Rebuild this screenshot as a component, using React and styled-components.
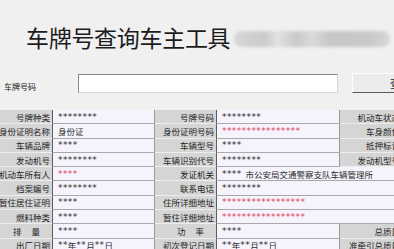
import React from "react";
import styled, { createGlobalStyle } from "styled-components";

const Global = createGlobalStyle`
  html, body { margin: 0; padding: 0; background: #f0f0f0; overflow: hidden; }
  body { font-family: "Noto Sans CJK SC", "DejaVu Sans", sans-serif; color: #1e1e1e; }
`;

const Page = styled.div`
  width: 394px;
  height: 249px;
  overflow: hidden;
  display: flex;
  flex-direction: column;
`;

const TitleBar = styled.div`
  display: flex;
  align-items: center;
  padding: 26px 0 0 26px;
  height: 23px;
  gap: 4px;
`;

const Title = styled.h1`
  margin: 0;
  font-size: 23px;
  line-height: 23px;
  font-weight: 400;
  letter-spacing: -0.3px;
  color: #1c1c1c;
  white-space: nowrap;
  flex-shrink: 0;
`;

const Blur = styled.div`
  width: 156px;
  height: 16px;
  flex-shrink: 0;
  border-radius: 8px;
  background: linear-gradient(90deg, #d6d6d6 0%, #cbcbcb 20%, #e2e2e2 28%, #c9c9c9 40%, #dadada 50%, #c6c6c6 62%, #c9c9c9 88%, #d8d8d8 100%);
  filter: blur(1.5px);
  margin-top: 2px;
`;

const SearchRow = styled.div`
  display: flex;
  align-items: center;
  margin-top: 24px;
  height: 20px;
  padding-left: 4px;
  width: 500px;
`;

const SearchLabel = styled.span`
  font-size: 8px;
  width: 74px;
  flex-shrink: 0;
  margin-top: 6px;
  color: #222;
  white-space: nowrap;
`;

const Input = styled.div`
  width: 260px;
  height: 19px;
  flex-shrink: 0;
  box-sizing: border-box;
  background: #fff;
  border-top: 1px solid #8a8a8a;
  border-left: 1px solid #8a8a8a;
  border-right: 1px solid #d8d8d8;
  border-bottom: 1px solid #d8d8d8;
`;

const Button = styled.div`
  margin-left: 14px;
  width: 100px;
  height: 20px;
  flex-shrink: 0;
  background: #ececec;
  border-top: 1px solid #fff;
  border-left: 1px solid #fff;
  border-bottom: 1px solid #5a5a5a;
  box-sizing: border-box;
  display: flex;
  align-items: center;
  padding-left: 37px;
  font-size: 11px;
  color: #222;
  white-space: nowrap;
`;

const Grid = styled.div`
  margin-top: 17px;
  display: grid;
  grid-template-columns: 52px 103px 61px 124px 62px;
  grid-auto-rows: 14.3px;
  width: 402px;
`;

const Label = styled.div`
  background: #d5d5d5;
  border-bottom: 1px solid #ededed;
  box-sizing: border-box;
  display: flex;
  align-items: center;
  justify-content: flex-end;
  padding-right: 2px;
  font-size: 8.5px;
  white-space: nowrap;
  overflow: hidden;
  color: #1e1e1e;
  letter-spacing: ${(p) => (p.$spread ? "10px" : "0")};
`;

const Value = styled.div`
  grid-column: ${(p) => (p.$wide ? "span 2" : "span 1")};
  background: #f5f4fc;
  border-left: 1px solid #5e5e5e;
  border-right: 1px solid #9a9a9a;
  border-bottom: 1px solid #a9a9a9;
  box-sizing: border-box;
  display: flex;
  align-items: center;
  padding-left: 5px;
  font-size: 8.5px;
  white-space: nowrap;
  overflow: hidden;
  color: ${(p) => (p.$red ? "#e23a55" : "#2a2a2a")};
`;

const Star = styled.span`
  font-family: "DejaVu Sans", sans-serif;
  font-size: 9px;
  letter-spacing: 0.4px;
`;

const Space = styled.span`
  display: inline-block;
  width: 4px;
`;

const Text = styled.span``;

const V = ({ v }) => {
  const parts = v.split(/(\*+|\s+)/).filter(Boolean);
  return parts.map((p, i) =>
    p[0] === "*" ? <Star key={i}>{p}</Star> : p.trim() === "" ? <Space key={i} /> : <Text key={i}>{p}</Text>
  );
};

const rows = [
  ["号牌种类", "********", false, "号牌号码", "********", false, "机动车状态"],
  ["身份证明名称", "身份证", false, "身份证明号码", "****************", true, "车身颜色"],
  ["车辆品牌", "****", false, "车辆型号", "****", false, "抵押标记"],
  ["发动机号", "********", false, "车辆识别代号", "********", false, "发动机型号"],
  ["机动车所有人", "****", true, "发证机关", "**** 市公安局交通警察支队车辆管理所", false, null],
  ["档案编号", "********", false, "联系电话", "********", false, null],
  ["暂住居住证明", "****", false, "住所详细地址", "*****************", true, null],
  ["燃料种类", "****", false, "暂住详细地址", "*****************", true, null],
  ["排量", "****", false, "功率", "****", false, "总质量", true],
  ["出厂日期", "**年**月**日", false, "初次登记日期", "**年**月**日", false, "准牵引总质量"],
];

export default function App() {
  return (
    <Page>
      <Global />
      <TitleBar>
        <Title>车牌号查询车主工具</Title>
        <Blur />
      </TitleBar>
      <SearchRow>
        <SearchLabel>车牌号码</SearchLabel>
        <Input />
        <Button>查询</Button>
      </SearchRow>
      <Grid>
        {rows.map(([l1, v1, r1, l2, v2, r2, l3, spread], i) => (
          <React.Fragment key={i}>
            <Label $spread={spread}>{l1}</Label>
            <Value $red={r1}><V v={v1} /></Value>
            <Label $spread={spread}>{l2}</Label>
            <Value $red={r2} $wide={!l3}><V v={v2} /></Value>
            {l3 && <Label>{l3}</Label>}
          </React.Fragment>
        ))}
      </Grid>
    </Page>
  );
}
